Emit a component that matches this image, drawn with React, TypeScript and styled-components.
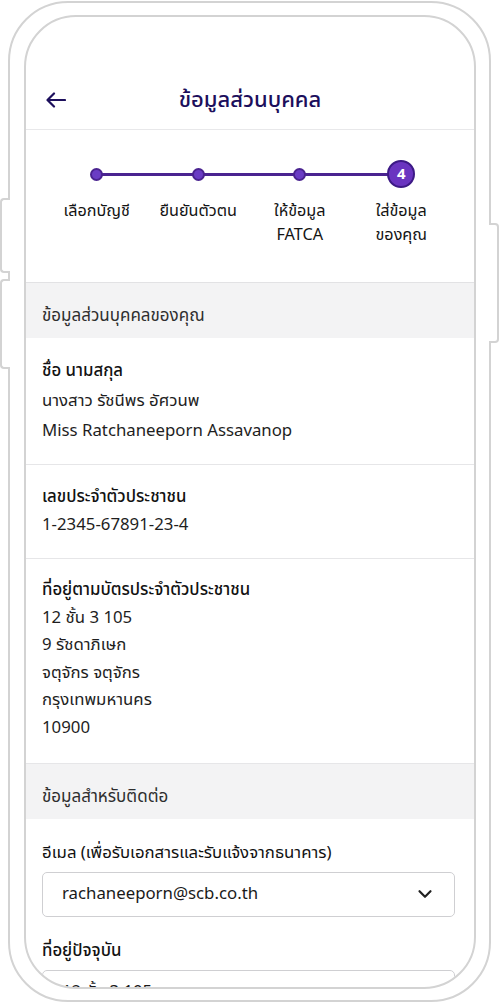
import React from 'react';
import styled, { createGlobalStyle } from 'styled-components';
import { ChevronDown } from 'lucide-react';

const GlobalStyle = createGlobalStyle`
  html, body { margin: 0; padding: 0; background: #ffffff; }
  body {
    font-family: "Noto Sans Thai", "Noto Sans", Inter, "Liberation Sans", sans-serif;
    color: #1a1a1a;
  }
  * { box-sizing: border-box; }
`;

const Stage = styled.div`
  width: 500px;
  height: 1004px;
  padding: 1px 0 0 8px;
  overflow: hidden;
  background: #ffffff;
`;

const Frame = styled.div`
  position: relative;
  width: 483px;
  height: 1001px;
  border: 2px solid #d3d3d3;
  border-radius: 60px;
  padding: 12px 13px 11px 14px;
  background: #ffffff;
`;

const SideButton = styled.div<{ $side: 'left' | 'right'; $top: number; $height: number }>`
  position: absolute;
  top: ${(p) => p.$top}px;
  height: ${(p) => p.$height}px;
  width: 10px;
  background: #ffffff;
  border: 2px solid #d3d3d3;
  ${(p) =>
    p.$side === 'left'
      ? 'left: -10px; border-right: none; border-radius: 4px 0 0 4px;'
      : 'right: -10px; border-left: none; border-radius: 0 4px 4px 0;'}
`;

const Screen = styled.div`
  height: 100%;
  border: 2px solid #d3d3d3;
  border-radius: 52px;
  overflow: hidden;
  display: flex;
  flex-direction: column;
  background: #ffffff;
`;

const Header = styled.header`
  flex: none;
  height: 113px;
  display: grid;
  grid-template-columns: 20px 1fr 20px;
  align-items: end;
  padding: 0 20px 9px;
  border-bottom: 1px solid #e8e8ea;
`;

const HeaderRow = styled.div`
  height: 40px;
  display: flex;
  align-items: center;
`;

const Title = styled.h1`
  margin: 0;
  height: 40px;
  display: flex;
  align-items: center;
  justify-content: center;
  font-size: 22px;
  font-weight: 500;
  color: #1c0f5c;
`;

const Stepper = styled.div`
  flex: none;
  display: grid;
  grid-template-columns: repeat(4, 101.5px);
  padding: 30px 0 35px 20px;
  border-bottom: 1px solid #e2e2e4;
`;

const Step = styled.div<{ $first?: boolean }>`
  position: relative;
  display: flex;
  flex-direction: column;
  align-items: center;
  ${(p) =>
    p.$first
      ? ''
      : `&::before {
    content: '';
    position: absolute;
    top: 12.5px;
    left: -50%;
    width: 100%;
    height: 3px;
    background: #4a2390;
  }`}
`;

const Indicator = styled.div`
  position: relative;
  z-index: 1;
  height: 28px;
  display: flex;
  align-items: center;
  justify-content: center;
`;

const Dot = styled.span`
  width: 13px;
  height: 13px;
  border-radius: 50%;
  background: #6a3cc4;
  border: 2px solid #4a2390;
`;

const CurrentDot = styled.span`
  width: 28px;
  height: 28px;
  border-radius: 50%;
  background: #6a34c0;
  border: 2.5px solid #3d1a86;
  color: #ffffff;
  font-size: 15px;
  font-weight: 700;
  display: flex;
  align-items: center;
  justify-content: center;
  line-height: 1;
`;

const StepLabel = styled.div`
  margin-top: 11px;
  font-size: 16.2px;
  line-height: 24px;
  text-align: center;
  color: #141414;
  white-space: pre-line;
`;

const SectionHeader = styled.div`
  flex: none;
  height: 55px;
  padding: 20px 16px 0;
  background: #f3f3f4;
  font-size: 17px;
  line-height: 26px;
  color: #2e2e2e;
`;

const InfoRow = styled.div<{ $lh?: number; $pb?: number }>`
  flex: none;
  padding: 18px 16px ${(p) => p.$pb ?? 18}px;
  border-bottom: 1px solid #e6e6e8;
  font-size: 16.8px;
  line-height: ${(p) => p.$lh ?? 28}px;
`;

const InfoLabel = styled.div`
  font-weight: 500;
  color: #121212;
`;

const InfoValue = styled.div`
  color: #1e1e1e;
`;

const Form = styled.div`
  flex: none;
  padding: 20px 19px 0 16px;
  display: flex;
  flex-direction: column;
`;

const FieldLabel = styled.div<{ $weight?: number }>`
  font-size: 16.8px;
  line-height: 28px;
  font-weight: ${(p) => p.$weight ?? 500};
  color: #121212;
  margin-bottom: 5px;
`;

const SelectBox = styled.div`
  height: 45px;
  border: 1px solid #cfcfd2;
  border-radius: 5px;
  padding: 0 18px 0 19px;
  display: flex;
  align-items: center;
  justify-content: space-between;
  font-size: 16.8px;
  color: #1a1a1a;
  margin-bottom: 20px;
`;

const BackArrow = () => (
  <svg width="20" height="16" viewBox="0 0 20 16" fill="none">
    <path d="M19 8H2M8 1.5L1.5 8L8 14.5" stroke="#1c0f5c" strokeWidth="2.2" strokeLinecap="round" strokeLinejoin="round" />
  </svg>
);

const steps = ['เลือกบัญชี', 'ยืนยันตัวตน', 'ให้ข้อมูล\nFATCA', 'ใส่ข้อมูล\nของคุณ'];

export default function App() {
  return (
    <>
      <GlobalStyle />
      <Stage>
        <Frame>
          <SideButton $side="left" $top={195} $height={75} />
          <SideButton $side="left" $top={276} $height={90} />
          <SideButton $side="right" $top={220} $height={120} />
          <Screen>
            <Header>
              <HeaderRow>
                <BackArrow />
              </HeaderRow>
              <Title>ข้อมูลส่วนบุคคล</Title>
              <span />
            </Header>
            <Stepper>
              {steps.map((s, i) => (
                <Step key={s} $first={i === 0}>
                  <Indicator>{i === 3 ? <CurrentDot>4</CurrentDot> : <Dot />}</Indicator>
                  <StepLabel>{s}</StepLabel>
                </Step>
              ))}
            </Stepper>
            <SectionHeader>ข้อมูลส่วนบุคคลของคุณ</SectionHeader>
            <InfoRow $lh={30}>
              <InfoLabel>ชื่อ นามสกุล</InfoLabel>
              <InfoValue>นางสาว รัชนีพร อัศวนพ</InfoValue>
              <InfoValue>Miss Ratchaneeporn Assavanop</InfoValue>
            </InfoRow>
            <InfoRow $pb={19}>
              <InfoLabel>เลขประจำตัวประชาชน</InfoLabel>
              <InfoValue>1-2345-67891-23-4</InfoValue>
            </InfoRow>
            <InfoRow $lh={27.6} $pb={20}>
              <InfoLabel>ที่อยู่ตามบัตรประจำตัวประชาชน</InfoLabel>
              <InfoValue>12 ชั้น 3 105</InfoValue>
              <InfoValue>9 รัชดาภิเษก</InfoValue>
              <InfoValue>จตุจักร จตุจักร</InfoValue>
              <InfoValue>กรุงเทพมหานคร</InfoValue>
              <InfoValue>10900</InfoValue>
            </InfoRow>
            <SectionHeader>ข้อมูลสำหรับติดต่อ</SectionHeader>
            <Form>
              <FieldLabel $weight={400}>อีเมล (เพื่อรับเอกสารและรับแจ้งจากธนาคาร)</FieldLabel>
              <SelectBox>
                <span>rachaneeporn@scb.co.th</span>
                <ChevronDown size={22} strokeWidth={2.4} color="#222" />
              </SelectBox>
              <FieldLabel>ที่อยู่ปัจจุบัน</FieldLabel>
              <SelectBox>
                <span>12 ชั้น 3 105</span>
              </SelectBox>
            </Form>
          </Screen>
        </Frame>
      </Stage>
    </>
  );
}
